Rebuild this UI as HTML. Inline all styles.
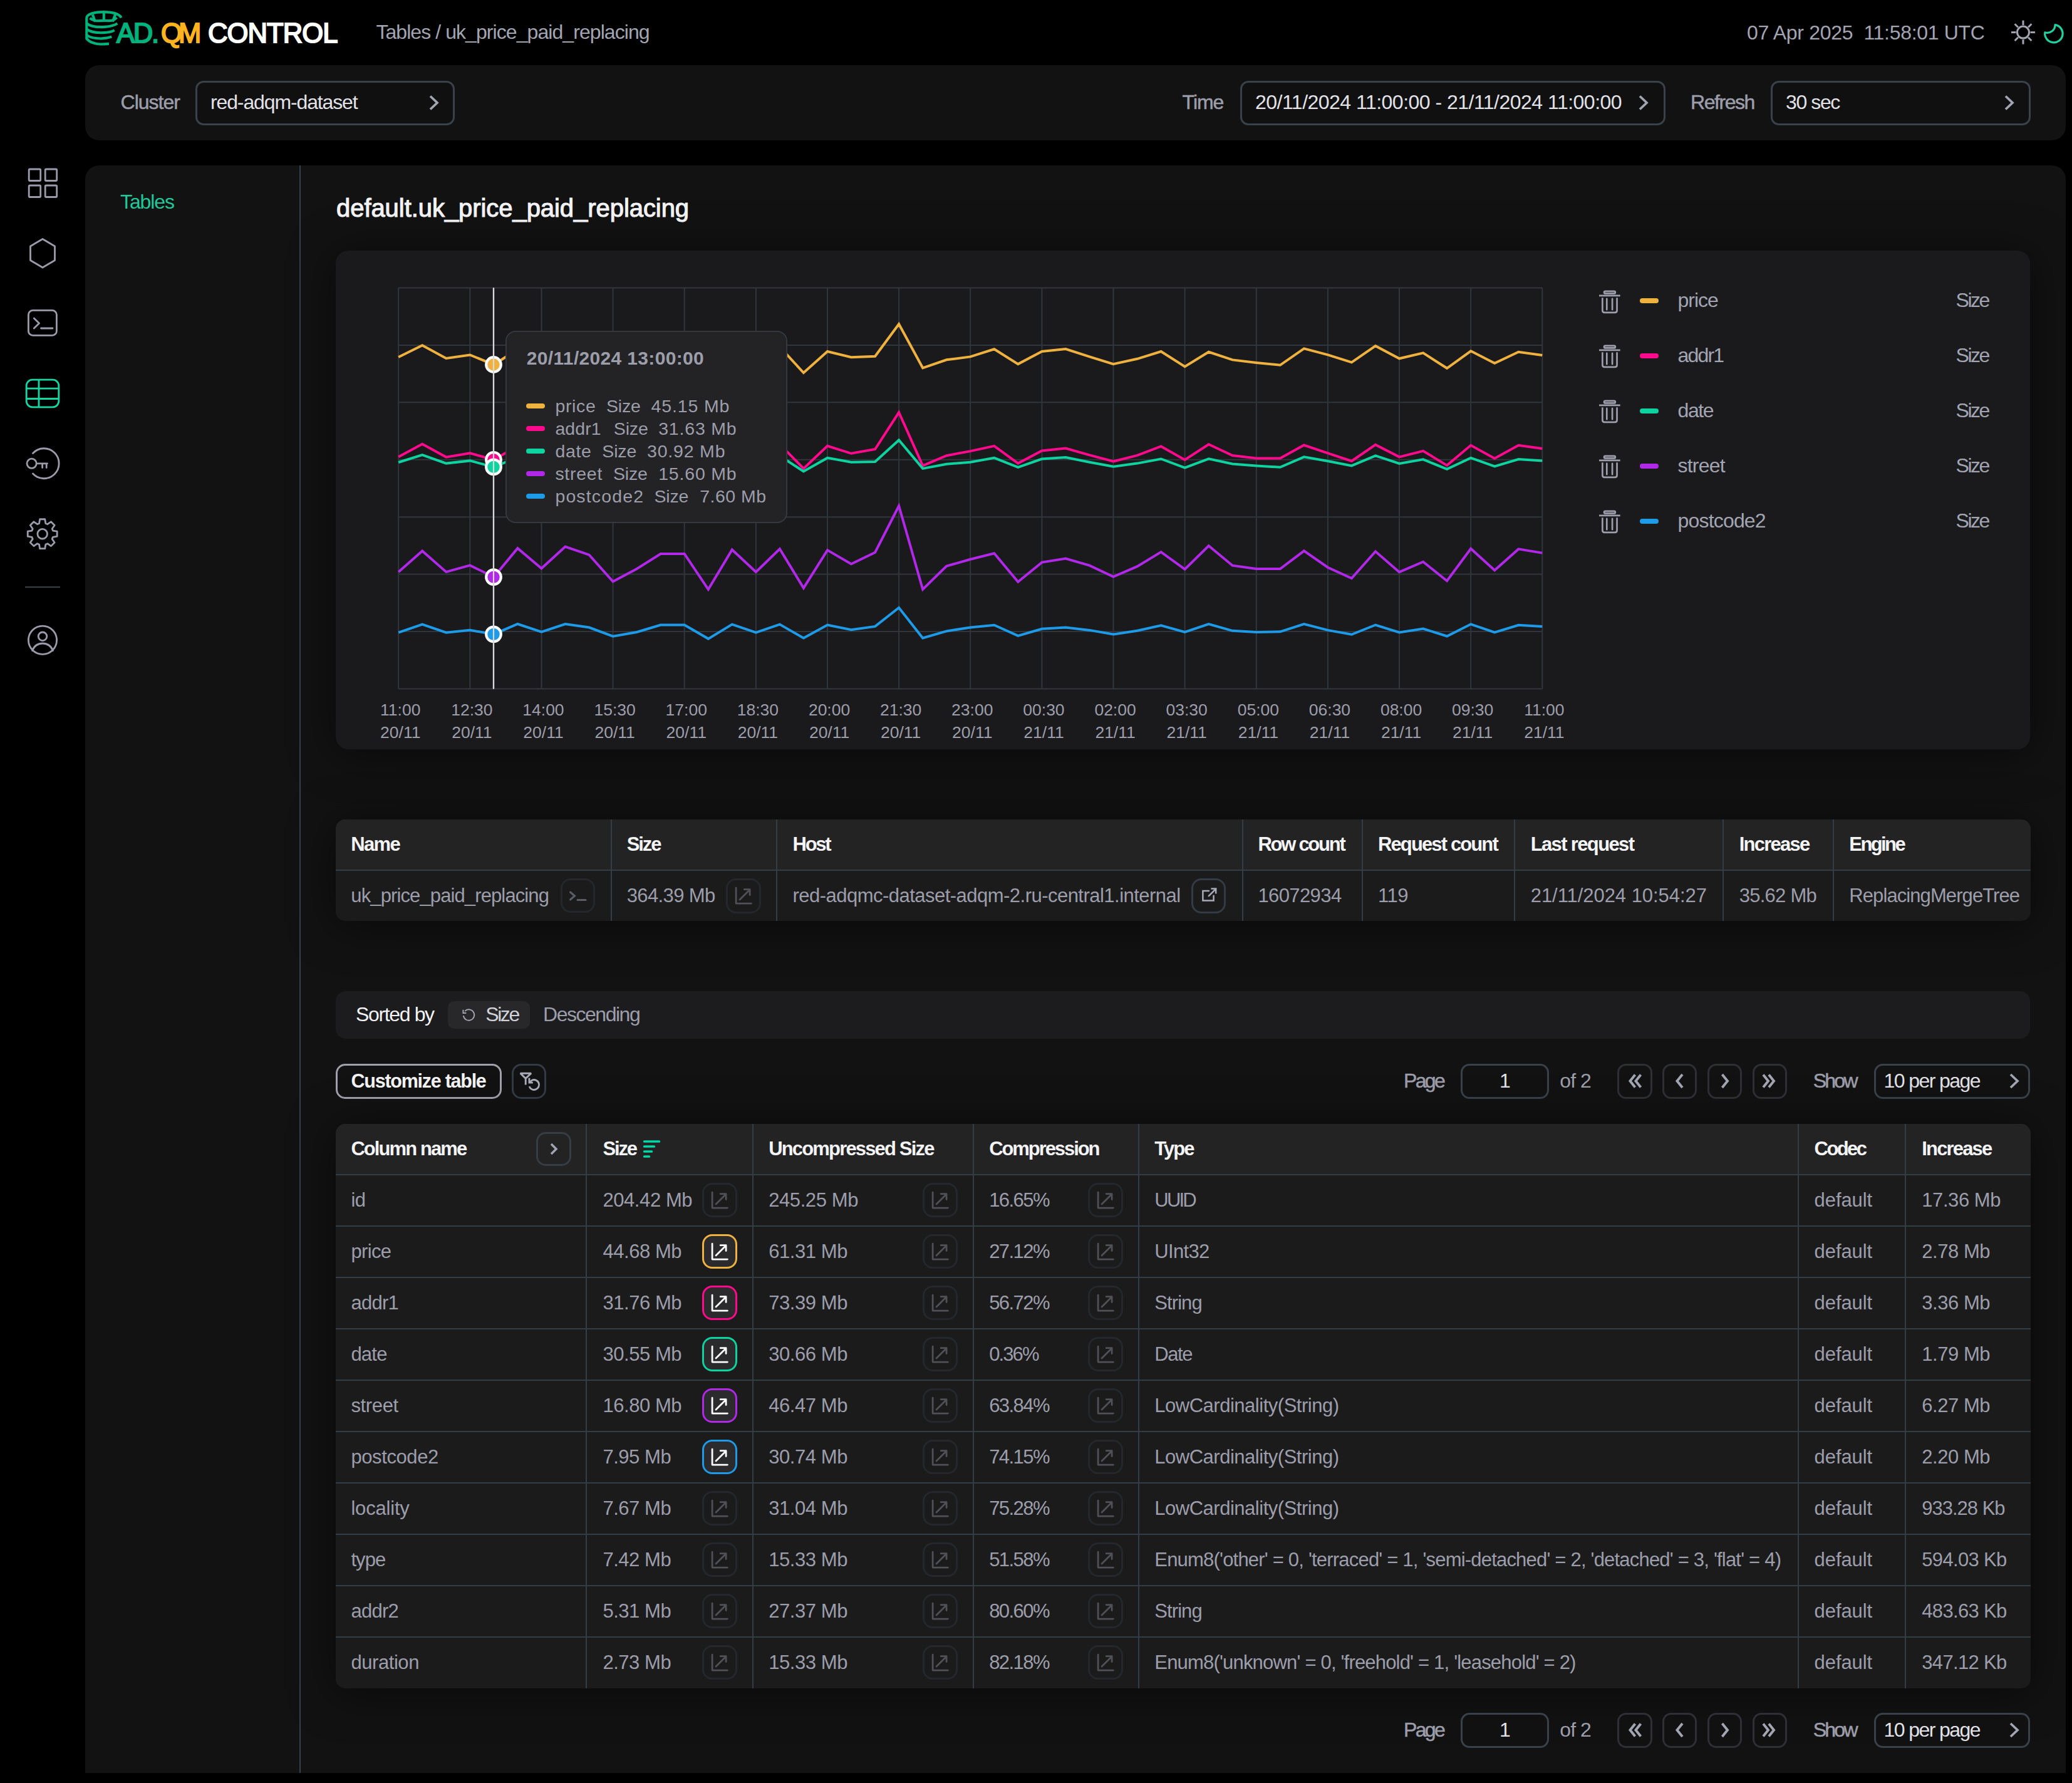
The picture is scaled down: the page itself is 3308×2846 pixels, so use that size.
<!DOCTYPE html>
<html><head><meta charset="utf-8"><title>ADQM Control</title>
<style>
html,body{margin:0;padding:0;}
body{width:3308px;height:2846px;background:#000;position:relative;overflow:hidden;font-family:"Liberation Sans",sans-serif;}
.t{position:absolute;white-space:pre;line-height:1;}
.b{position:absolute;box-sizing:border-box;}
svg{position:absolute;overflow:visible;}
</style></head><body>
<svg style="left:130px;top:10px" width="130" height="70" viewBox="0 0 2072 1116">
<g fill="none" stroke="#00b27c" stroke-width="66" stroke-linecap="butt">
<path d="M132 840 V300 C132 195 330 145 570 145 C800 145 960 195 1015 290"/>
<path d="M215 300 C330 400 440 365 570 365 C700 365 800 395 900 290"/>
<path d="M570 150 V345"/>
<path d="M285 215 L350 395"/>
<path d="M860 210 L795 390"/>
<path d="M140 440 C260 540 520 530 600 525 C740 515 850 480 915 440"/>
<path d="M140 590 C260 680 480 675 560 672 C680 668 780 645 840 610"/>
<path d="M140 740 C250 820 440 822 520 820 C620 815 700 800 770 775"/>
<path d="M132 820 C200 930 400 965 480 965 C560 965 640 960 700 955"/>
</g></svg>
<div class="t" style="left:186.0px;top:32.1px;font-size:43.60px;color:#00b27c;letter-spacing:-2.250px;-webkit-text-stroke:2px #00b27c;">AD.</div>
<div class="t" style="left:257.0px;top:32.1px;font-size:43.60px;color:#ffb41f;letter-spacing:-6.000px;-webkit-text-stroke:2px #ffb41f;">QM</div>
<div class="t" style="left:332.0px;top:32.1px;font-size:43.60px;color:#ffffff;letter-spacing:-0.958px;-webkit-text-stroke:2px #ffffff;">CONTROL</div>
<div class="t" style="left:600.4px;top:35.3px;font-size:32.00px;color:#a3a5b3;letter-spacing:-0.932px;">Tables / uk_price_paid_replacing</div>
<div class="t" style="left:2789.0px;top:35.8px;font-size:32.00px;color:#a3a5b3;letter-spacing:-0.302px;">07 Apr 2025  11:58:01 UTC</div>
<svg style="left:0;top:0" width="3308" height="100"><g stroke="#a3a5b3" stroke-width="3" fill="none"><circle cx="3230" cy="51.6" r="9.5"/><line x1="3241.5" y1="51.6" x2="3249.0" y2="51.6"/><line x1="3238.1" y1="59.7" x2="3243.4" y2="65.0"/><line x1="3230.0" y1="63.1" x2="3230.0" y2="70.6"/><line x1="3221.9" y1="59.7" x2="3216.6" y2="65.0"/><line x1="3218.5" y1="51.6" x2="3211.0" y2="51.6"/><line x1="3221.9" y1="43.5" x2="3216.6" y2="38.2"/><line x1="3230.0" y1="40.1" x2="3230.0" y2="32.6"/><line x1="3238.1" y1="43.5" x2="3243.4" y2="38.2"/></g><path d="M3281 39.6 A14.2 14.2 0 1 1 3264.8 51.8 A12.5 12.5 0 0 0 3281 39.6 Z" fill="none" stroke="#1fd3a0" stroke-width="3.2" stroke-linejoin="round"/></svg>
<div class="b" style="left:136.0px;top:104.0px;width:3162.0px;height:119.5px;background:#121212;border-radius:22px;"></div>
<div class="t" style="left:192.6px;top:146.9px;font-size:32.00px;color:#9d9eab;letter-spacing:-1.025px;-webkit-text-stroke:0.5px #9d9eab;">Cluster</div>
<div class="b" style="left:312.0px;top:128.6px;width:414.0px;height:71.0px;border:3px solid #39414a;border-radius:13px;background:#101010;"></div>
<div class="t" style="left:336.0px;top:146.9px;font-size:32.00px;color:#e2e2e8;letter-spacing:-1.127px;">red-adqm-dataset</div>
<svg style="left:684.0px;top:151px" width="20" height="26"><path d="M3 2.5 L14 13 L3 23.5" fill="none" stroke="#a3a5b3" stroke-width="3.8"/></svg>
<div class="t" style="left:1887.6px;top:146.9px;font-size:32.00px;color:#9d9eab;letter-spacing:-1.033px;-webkit-text-stroke:0.5px #9d9eab;">Time</div>
<div class="b" style="left:1979.6px;top:128.6px;width:679.0px;height:71.0px;border:3px solid #39414a;border-radius:13px;background:#101010;"></div>
<div class="t" style="left:2004.0px;top:146.9px;font-size:32.00px;color:#e2e2e8;letter-spacing:-0.514px;">20/11/2024 11:00:00 - 21/11/2024 11:00:00</div>
<svg style="left:2615.0px;top:151px" width="20" height="26"><path d="M3 2.5 L14 13 L3 23.5" fill="none" stroke="#a3a5b3" stroke-width="3.8"/></svg>
<div class="t" style="left:2699.0px;top:146.9px;font-size:32.00px;color:#9d9eab;letter-spacing:-1.450px;-webkit-text-stroke:0.5px #9d9eab;">Refresh</div>
<div class="b" style="left:2827.3px;top:128.6px;width:414.4px;height:71.0px;border:3px solid #39414a;border-radius:13px;background:#101010;"></div>
<div class="t" style="left:2851.0px;top:146.9px;font-size:32.00px;color:#e2e2e8;letter-spacing:-1.390px;">30 sec</div>
<svg style="left:3199.0px;top:151px" width="20" height="26"><path d="M3 2.5 L14 13 L3 23.5" fill="none" stroke="#a3a5b3" stroke-width="3.8"/></svg>
<svg style="left:0;top:0" width="136" height="1100"><g fill="none" stroke="#9a9cab" stroke-width="2.8" stroke-linejoin="round" stroke-linecap="round"><rect x="46.2" y="270" width="18.5" height="18.5" rx="1.5"/><rect x="72.2" y="270" width="18.5" height="18.5" rx="1.5"/><rect x="46.2" y="296" width="18.5" height="18.5" rx="1.5"/><rect x="72.2" y="296" width="18.5" height="18.5" rx="1.5"/><path d="M68 381.5 L87.5 393 L87.5 415.5 L68 427 L48.5 415.5 L48.5 393 Z"/><rect x="45.4" y="495.4" width="45" height="40" rx="7"/><path d="M54.3 508 L62.5 516 L54.3 524"/><path d="M65.5 524 H84"/><path d="M52.5 723.5 A24 24 0 1 1 52.5 756"/><circle cx="50.6" cy="739.8" r="7.6"/><path d="M58.2 739.8 H75.5 M67.6 739.8 V746.5 M74.2 739.8 V746.5"/><path d="M62.53 835.48 L63.67 828.74 L71.73 828.74 L72.87 835.48 L75.86 836.72 L81.44 832.77 L87.13 838.46 L83.18 844.04 L84.42 847.03 L91.16 848.17 L91.16 856.23 L84.42 857.37 L83.18 860.36 L87.13 865.94 L81.44 871.63 L75.86 867.68 L72.87 868.92 L71.73 875.66 L63.67 875.66 L62.53 868.92 L59.54 867.68 L53.96 871.63 L48.27 865.94 L52.22 860.36 L50.98 857.37 L44.24 856.23 L44.24 848.17 L50.98 847.03 L52.22 844.04 L48.27 838.46 L53.96 832.77 L59.54 836.72 Z"/><circle cx="67.7" cy="852.2" r="7.8"/><circle cx="68" cy="1021.8" r="22.6"/><circle cx="68" cy="1015.8" r="6.8"/><path d="M51.5 1038.5 C55 1030 61 1027 68 1027 C75 1027 81 1030 84.5 1038.5"/></g><g fill="none" stroke="#12d8a4" stroke-width="2.8"><rect x="42.2" y="606.2" width="51.6" height="43.6" rx="9.5"/><path d="M62 606.2 V649.8 M42.2 620.2 H93.8 M42.2 636.5 H93.8"/></g><rect x="40" y="936" width="56" height="2.2" fill="#353d45"/></svg>
<div class="b" style="left:136.0px;top:264.0px;width:3162.0px;height:2566.0px;background:#121212;border-radius:22px 22px 0 0;"></div>
<div class="b" style="left:478.0px;top:264.0px;width:2.0px;height:2566.0px;background:#35414d;"></div>
<div class="t" style="left:192.0px;top:305.7px;font-size:32.00px;color:#1fc99a;letter-spacing:-1.100px;">Tables</div>
<div class="t" style="left:537.0px;top:312.1px;font-size:40.00px;color:#f4f4f6;letter-spacing:-0.058px;-webkit-text-stroke:1.1px #f4f4f6;">default.uk_price_paid_replacing</div>
<div class="b" style="left:536.0px;top:400.0px;width:2705.0px;height:796.0px;background:#1a1a1d;border-radius:20px;box-shadow:0 6px 70px rgba(0,0,0,0.5);"></div>
<svg style="left:0;top:0" width="3308" height="1200"><g stroke="#30363d" stroke-width="2" fill="none"><line x1="636.2" y1="459.5" x2="636.2" y2="1099.4"/><line x1="750.3" y1="459.5" x2="750.3" y2="1099.4"/><line x1="864.5" y1="459.5" x2="864.5" y2="1099.4"/><line x1="978.6" y1="459.5" x2="978.6" y2="1099.4"/><line x1="1092.7" y1="459.5" x2="1092.7" y2="1099.4"/><line x1="1206.9" y1="459.5" x2="1206.9" y2="1099.4"/><line x1="1321.0" y1="459.5" x2="1321.0" y2="1099.4"/><line x1="1435.1" y1="459.5" x2="1435.1" y2="1099.4"/><line x1="1549.2" y1="459.5" x2="1549.2" y2="1099.4"/><line x1="1663.4" y1="459.5" x2="1663.4" y2="1099.4"/><line x1="1777.5" y1="459.5" x2="1777.5" y2="1099.4"/><line x1="1891.6" y1="459.5" x2="1891.6" y2="1099.4"/><line x1="2005.8" y1="459.5" x2="2005.8" y2="1099.4"/><line x1="2119.9" y1="459.5" x2="2119.9" y2="1099.4"/><line x1="2234.0" y1="459.5" x2="2234.0" y2="1099.4"/><line x1="2348.2" y1="459.5" x2="2348.2" y2="1099.4"/><line x1="2462.3" y1="459.5" x2="2462.3" y2="1099.4"/><line x1="636.2" y1="459.5" x2="2462.3" y2="459.5"/><line x1="636.2" y1="550.9" x2="2462.3" y2="550.9"/><line x1="636.2" y1="642.3" x2="2462.3" y2="642.3"/><line x1="636.2" y1="733.7" x2="2462.3" y2="733.7"/><line x1="636.2" y1="825.2" x2="2462.3" y2="825.2"/><line x1="636.2" y1="916.6" x2="2462.3" y2="916.6"/><line x1="636.2" y1="1008.0" x2="2462.3" y2="1008.0"/><line x1="636.2" y1="1099.4" x2="2462.3" y2="1099.4"/></g><path d="M636.2 570.0 L674.2 551.2 L712.3 572.0 L750.3 566.5 L788.4 582.0 L826.4 557.7 L864.5 565.0 L902.5 575.0 L940.6 560.0 L978.6 570.0 L1016.6 568.0 L1054.7 580.0 L1092.7 562.0 L1130.8 572.0 L1168.8 566.0 L1206.9 575.0 L1244.9 553.6 L1282.9 595.0 L1321.0 561.0 L1359.0 570.3 L1397.1 568.8 L1435.1 517.2 L1473.2 587.3 L1511.2 574.3 L1549.2 569.4 L1587.3 557.3 L1625.3 581.1 L1663.4 561.0 L1701.4 557.0 L1739.5 569.4 L1777.5 581.1 L1815.6 572.8 L1853.6 561.0 L1891.6 585.2 L1929.7 561.8 L1967.7 574.4 L2005.8 578.9 L2043.8 582.8 L2081.9 556.4 L2119.9 566.3 L2157.9 578.3 L2196.0 552.2 L2234.0 572.3 L2272.1 563.3 L2310.1 587.8 L2348.2 560.3 L2386.2 579.8 L2424.3 561.8 L2462.3 566.9" fill="none" stroke="#f0b23f" stroke-width="4" stroke-linejoin="miter"/><path d="M636.2 729.2 L674.2 708.8 L712.3 729.6 L750.3 723.4 L788.4 733.8 L826.4 712.0 L864.5 720.0 L902.5 730.0 L940.6 715.0 L978.6 725.0 L1016.6 722.0 L1054.7 735.0 L1092.7 718.0 L1130.8 728.0 L1168.8 720.0 L1206.9 732.0 L1244.9 709.0 L1282.9 747.9 L1321.0 711.8 L1359.0 723.8 L1397.1 717.0 L1435.1 658.3 L1473.2 743.3 L1511.2 727.2 L1549.2 720.1 L1587.3 711.8 L1625.3 739.6 L1663.4 719.5 L1701.4 715.5 L1739.5 726.3 L1777.5 736.5 L1815.6 726.9 L1853.6 712.4 L1891.6 733.9 L1929.7 709.3 L1967.7 727.0 L2005.8 731.5 L2043.8 731.5 L2081.9 710.5 L2119.9 723.4 L2157.9 736.0 L2196.0 709.9 L2234.0 729.4 L2272.1 719.8 L2310.1 742.9 L2348.2 710.8 L2386.2 731.8 L2424.3 710.8 L2462.3 715.9" fill="none" stroke="#ff0a8c" stroke-width="4" stroke-linejoin="miter"/><path d="M636.2 738.0 L674.2 726.0 L712.3 739.6 L750.3 735.4 L788.4 745.4 L826.4 730.0 L864.5 735.0 L902.5 742.0 L940.6 731.0 L978.6 738.0 L1016.6 736.0 L1054.7 746.0 L1092.7 733.0 L1130.8 740.0 L1168.8 735.0 L1206.9 744.0 L1244.9 727.5 L1282.9 752.5 L1321.0 730.9 L1359.0 737.7 L1397.1 737.1 L1435.1 702.5 L1473.2 747.9 L1511.2 740.8 L1549.2 737.7 L1587.3 730.9 L1625.3 745.8 L1663.4 732.5 L1701.4 730.0 L1739.5 737.7 L1777.5 744.8 L1815.6 739.6 L1853.6 732.5 L1891.6 746.7 L1929.7 732.4 L1967.7 740.5 L2005.8 743.4 L2043.8 745.8 L2081.9 729.4 L2119.9 736.0 L2157.9 743.4 L2196.0 727.3 L2234.0 739.9 L2272.1 733.3 L2310.1 748.8 L2348.2 730.9 L2386.2 744.3 L2424.3 733.0 L2462.3 735.4" fill="none" stroke="#0cd3a0" stroke-width="4" stroke-linejoin="miter"/><path d="M636.2 912.9 L674.2 879.4 L712.3 912.9 L750.3 902.4 L788.4 921.1 L826.4 875.2 L864.5 907.3 L902.5 872.5 L940.6 885.7 L978.6 928.3 L1016.6 908.0 L1054.7 884.0 L1092.7 884.0 L1130.8 940.8 L1168.8 877.5 L1206.9 912.9 L1244.9 876.2 L1282.9 938.6 L1321.0 878.1 L1359.0 900.3 L1397.1 881.7 L1435.1 807.5 L1473.2 940.7 L1511.2 903.6 L1549.2 892.8 L1587.3 883.2 L1625.3 928.7 L1663.4 897.6 L1701.4 891.6 L1739.5 902.7 L1777.5 920.6 L1815.6 904.2 L1853.6 881.1 L1891.6 908.7 L1929.7 871.3 L1967.7 902.7 L2005.8 908.1 L2043.8 908.1 L2081.9 879.3 L2119.9 905.7 L2157.9 923.0 L2196.0 880.2 L2234.0 913.2 L2272.1 896.7 L2310.1 927.2 L2348.2 875.8 L2386.2 910.2 L2424.3 876.4 L2462.3 882.6" fill="none" stroke="#b128e8" stroke-width="4" stroke-linejoin="miter"/><path d="M636.2 1009.7 L674.2 996.6 L712.3 1009.7 L750.3 1005.8 L788.4 1012.4 L826.4 996.0 L864.5 1008.7 L902.5 996.0 L940.6 1001.5 L978.6 1015.6 L1016.6 1009.0 L1054.7 997.6 L1092.7 997.6 L1130.8 1019.6 L1168.8 996.6 L1206.9 1009.7 L1244.9 996.6 L1282.9 1018.5 L1321.0 997.5 L1359.0 1005.3 L1397.1 999.9 L1435.1 970.0 L1473.2 1018.5 L1511.2 1007.4 L1549.2 1001.4 L1587.3 997.8 L1625.3 1014.9 L1663.4 1003.8 L1701.4 1001.4 L1739.5 1005.9 L1777.5 1012.5 L1815.6 1006.8 L1853.6 998.4 L1891.6 1008.9 L1929.7 996.0 L1967.7 1006.8 L2005.8 1008.9 L2043.8 1008.3 L2081.9 996.0 L2119.9 1005.9 L2157.9 1012.8 L2196.0 997.5 L2234.0 1009.5 L2272.1 1003.5 L2310.1 1015.5 L2348.2 996.3 L2386.2 1009.5 L2424.3 997.8 L2462.3 999.9" fill="none" stroke="#1e9be8" stroke-width="4" stroke-linejoin="miter"/><line x1="788" y1="459.5" x2="788" y2="1099.4" stroke="#d9d9dc" stroke-width="2.2"/><circle cx="788" cy="582.0" r="11.8" fill="#f0b23f" stroke="#ffffff" stroke-width="4.2"/><circle cx="788" cy="733.8" r="11.8" fill="#ff0a8c" stroke="#ffffff" stroke-width="4.2"/><circle cx="788" cy="745.4" r="11.8" fill="#0cd3a0" stroke="#ffffff" stroke-width="4.2"/><circle cx="788" cy="921.1" r="11.8" fill="#b128e8" stroke="#ffffff" stroke-width="4.2"/><circle cx="788" cy="1012.4" r="11.8" fill="#1e9be8" stroke="#ffffff" stroke-width="4.2"/><line x1="788" y1="459.5" x2="788" y2="1099.4" stroke="#d9d9dc" stroke-width="2.2"/></svg>
<div class="b" style="left:806.5px;top:528.0px;width:450.5px;height:307.0px;background:#232325;border:2px solid #34393f;border-radius:16px;"></div>
<div class="t" style="left:840.8px;top:556.5px;font-size:30.00px;color:#9d9eab;letter-spacing:0.333px;font-weight:bold;">20/11/2024 13:00:00</div>
<div class="b" style="left:840.0px;top:644.0px;width:30.0px;height:8.0px;background:#f0b23f;border-radius:4px;"></div>
<div class="t" style="left:886.4px;top:633.5px;font-size:28.50px;color:#9d9eab;letter-spacing:0.662px;">price</div>
<div class="t" style="left:968.0px;top:633.5px;font-size:28.50px;color:#9d9eab;letter-spacing:-0.167px;">Size</div>
<div class="t" style="left:1039.6px;top:633.5px;font-size:28.50px;color:#9d9eab;letter-spacing:0.864px;">45.15 Mb</div>
<div class="b" style="left:840.0px;top:680.0px;width:30.0px;height:8.0px;background:#ff0a8c;border-radius:4px;"></div>
<div class="t" style="left:886.4px;top:669.5px;font-size:28.50px;color:#9d9eab;letter-spacing:0.075px;">addr1</div>
<div class="t" style="left:979.8px;top:669.5px;font-size:28.50px;color:#9d9eab;letter-spacing:-0.167px;">Size</div>
<div class="t" style="left:1051.2px;top:669.5px;font-size:28.50px;color:#9d9eab;letter-spacing:0.807px;">31.63 Mb</div>
<div class="b" style="left:840.0px;top:716.0px;width:30.0px;height:8.0px;background:#0cd3a0;border-radius:4px;"></div>
<div class="t" style="left:886.4px;top:705.5px;font-size:28.50px;color:#9d9eab;letter-spacing:0.667px;">date</div>
<div class="t" style="left:961.3px;top:705.5px;font-size:28.50px;color:#9d9eab;letter-spacing:-0.167px;">Size</div>
<div class="t" style="left:1033.0px;top:705.5px;font-size:28.50px;color:#9d9eab;letter-spacing:0.807px;">30.92 Mb</div>
<div class="b" style="left:840.0px;top:752.0px;width:30.0px;height:8.0px;background:#b128e8;border-radius:4px;"></div>
<div class="t" style="left:886.4px;top:741.5px;font-size:28.50px;color:#9d9eab;letter-spacing:0.730px;">street</div>
<div class="t" style="left:979.0px;top:741.5px;font-size:28.50px;color:#9d9eab;letter-spacing:-0.167px;">Size</div>
<div class="t" style="left:1051.2px;top:741.5px;font-size:28.50px;color:#9d9eab;letter-spacing:0.807px;">15.60 Mb</div>
<div class="b" style="left:840.0px;top:788.0px;width:30.0px;height:8.0px;background:#1e9be8;border-radius:4px;"></div>
<div class="t" style="left:886.4px;top:777.5px;font-size:28.50px;color:#9d9eab;letter-spacing:1.138px;">postcode2</div>
<div class="t" style="left:1044.4px;top:777.5px;font-size:28.50px;color:#9d9eab;letter-spacing:-0.167px;">Size</div>
<div class="t" style="left:1117.2px;top:777.5px;font-size:28.50px;color:#9d9eab;letter-spacing:0.500px;">7.60 Mb</div>
<div class="t" style="left:607.1px;top:1120.3px;font-size:26.50px;color:#9d9eab;">11:00</div>
<div class="t" style="left:607.1px;top:1155.9px;font-size:26.50px;color:#9d9eab;">20/11</div>
<div class="t" style="left:720.2px;top:1120.3px;font-size:26.50px;color:#9d9eab;">12:30</div>
<div class="t" style="left:721.2px;top:1155.9px;font-size:26.50px;color:#9d9eab;">20/11</div>
<div class="t" style="left:834.3px;top:1120.3px;font-size:26.50px;color:#9d9eab;">14:00</div>
<div class="t" style="left:835.3px;top:1155.9px;font-size:26.50px;color:#9d9eab;">20/11</div>
<div class="t" style="left:948.5px;top:1120.3px;font-size:26.50px;color:#9d9eab;">15:30</div>
<div class="t" style="left:949.5px;top:1155.9px;font-size:26.50px;color:#9d9eab;">20/11</div>
<div class="t" style="left:1062.6px;top:1120.3px;font-size:26.50px;color:#9d9eab;">17:00</div>
<div class="t" style="left:1063.6px;top:1155.9px;font-size:26.50px;color:#9d9eab;">20/11</div>
<div class="t" style="left:1176.7px;top:1120.3px;font-size:26.50px;color:#9d9eab;">18:30</div>
<div class="t" style="left:1177.7px;top:1155.9px;font-size:26.50px;color:#9d9eab;">20/11</div>
<div class="t" style="left:1290.9px;top:1120.3px;font-size:26.50px;color:#9d9eab;">20:00</div>
<div class="t" style="left:1291.9px;top:1155.9px;font-size:26.50px;color:#9d9eab;">20/11</div>
<div class="t" style="left:1405.0px;top:1120.3px;font-size:26.50px;color:#9d9eab;">21:30</div>
<div class="t" style="left:1406.0px;top:1155.9px;font-size:26.50px;color:#9d9eab;">20/11</div>
<div class="t" style="left:1519.1px;top:1120.3px;font-size:26.50px;color:#9d9eab;">23:00</div>
<div class="t" style="left:1520.1px;top:1155.9px;font-size:26.50px;color:#9d9eab;">20/11</div>
<div class="t" style="left:1633.3px;top:1120.3px;font-size:26.50px;color:#9d9eab;">00:30</div>
<div class="t" style="left:1634.3px;top:1155.9px;font-size:26.50px;color:#9d9eab;">21/11</div>
<div class="t" style="left:1747.4px;top:1120.3px;font-size:26.50px;color:#9d9eab;">02:00</div>
<div class="t" style="left:1748.4px;top:1155.9px;font-size:26.50px;color:#9d9eab;">21/11</div>
<div class="t" style="left:1861.5px;top:1120.3px;font-size:26.50px;color:#9d9eab;">03:30</div>
<div class="t" style="left:1862.5px;top:1155.9px;font-size:26.50px;color:#9d9eab;">21/11</div>
<div class="t" style="left:1975.7px;top:1120.3px;font-size:26.50px;color:#9d9eab;">05:00</div>
<div class="t" style="left:1976.7px;top:1155.9px;font-size:26.50px;color:#9d9eab;">21/11</div>
<div class="t" style="left:2089.8px;top:1120.3px;font-size:26.50px;color:#9d9eab;">06:30</div>
<div class="t" style="left:2090.8px;top:1155.9px;font-size:26.50px;color:#9d9eab;">21/11</div>
<div class="t" style="left:2203.9px;top:1120.3px;font-size:26.50px;color:#9d9eab;">08:00</div>
<div class="t" style="left:2204.9px;top:1155.9px;font-size:26.50px;color:#9d9eab;">21/11</div>
<div class="t" style="left:2318.0px;top:1120.3px;font-size:26.50px;color:#9d9eab;">09:30</div>
<div class="t" style="left:2319.0px;top:1155.9px;font-size:26.50px;color:#9d9eab;">21/11</div>
<div class="t" style="left:2433.2px;top:1120.3px;font-size:26.50px;color:#9d9eab;">11:00</div>
<div class="t" style="left:2433.2px;top:1155.9px;font-size:26.50px;color:#9d9eab;">21/11</div>
<svg style="left:2553.0px;top:462.5px" width="36" height="40" viewBox="0 0 36 40"><g fill="none" stroke="#9d9eab" stroke-width="2.7"><path d="M0 8.9 H33.7"/><rect x="8.05" y="1.85" width="17.8" height="3.6" rx="1.8"/><path d="M5.35 12.3 V32.5 Q5.35 35.95 8.8 35.95 H25.1 Q28.55 35.95 28.55 32.5 V12.3"/><path d="M12.3 13.8 V31.2 M21.1 13.8 V31.2" stroke-linecap="round"/></g></svg>
<div class="b" style="left:2618.0px;top:476.0px;width:30.0px;height:8.0px;background:#f0b23f;border-radius:4px;"></div>
<div class="t" style="left:2678.6px;top:462.9px;font-size:32.00px;color:#a3a5b3;letter-spacing:-1.038px;">price</div>
<div class="t" style="left:3122.6px;top:462.9px;font-size:32.00px;color:#a3a5b3;letter-spacing:-2.517px;">Size</div>
<svg style="left:2553.0px;top:550.4px" width="36" height="40" viewBox="0 0 36 40"><g fill="none" stroke="#9d9eab" stroke-width="2.7"><path d="M0 8.9 H33.7"/><rect x="8.05" y="1.85" width="17.8" height="3.6" rx="1.8"/><path d="M5.35 12.3 V32.5 Q5.35 35.95 8.8 35.95 H25.1 Q28.55 35.95 28.55 32.5 V12.3"/><path d="M12.3 13.8 V31.2 M21.1 13.8 V31.2" stroke-linecap="round"/></g></svg>
<div class="b" style="left:2618.0px;top:563.9px;width:30.0px;height:8.0px;background:#ff0a8c;border-radius:4px;"></div>
<div class="t" style="left:2678.6px;top:550.8px;font-size:32.00px;color:#a3a5b3;letter-spacing:-1.862px;">addr1</div>
<div class="t" style="left:3122.6px;top:550.8px;font-size:32.00px;color:#a3a5b3;letter-spacing:-2.517px;">Size</div>
<svg style="left:2553.0px;top:638.3px" width="36" height="40" viewBox="0 0 36 40"><g fill="none" stroke="#9d9eab" stroke-width="2.7"><path d="M0 8.9 H33.7"/><rect x="8.05" y="1.85" width="17.8" height="3.6" rx="1.8"/><path d="M5.35 12.3 V32.5 Q5.35 35.95 8.8 35.95 H25.1 Q28.55 35.95 28.55 32.5 V12.3"/><path d="M12.3 13.8 V31.2 M21.1 13.8 V31.2" stroke-linecap="round"/></g></svg>
<div class="b" style="left:2618.0px;top:651.8px;width:30.0px;height:8.0px;background:#0cd3a0;border-radius:4px;"></div>
<div class="t" style="left:2678.6px;top:638.7px;font-size:32.00px;color:#a3a5b3;letter-spacing:-1.417px;">date</div>
<div class="t" style="left:3122.6px;top:638.7px;font-size:32.00px;color:#a3a5b3;letter-spacing:-2.517px;">Size</div>
<svg style="left:2553.0px;top:726.2px" width="36" height="40" viewBox="0 0 36 40"><g fill="none" stroke="#9d9eab" stroke-width="2.7"><path d="M0 8.9 H33.7"/><rect x="8.05" y="1.85" width="17.8" height="3.6" rx="1.8"/><path d="M5.35 12.3 V32.5 Q5.35 35.95 8.8 35.95 H25.1 Q28.55 35.95 28.55 32.5 V12.3"/><path d="M12.3 13.8 V31.2 M21.1 13.8 V31.2" stroke-linecap="round"/></g></svg>
<div class="b" style="left:2618.0px;top:739.7px;width:30.0px;height:8.0px;background:#b128e8;border-radius:4px;"></div>
<div class="t" style="left:2678.6px;top:726.6px;font-size:32.00px;color:#a3a5b3;letter-spacing:-0.820px;">street</div>
<div class="t" style="left:3122.6px;top:726.6px;font-size:32.00px;color:#a3a5b3;letter-spacing:-2.517px;">Size</div>
<svg style="left:2553.0px;top:814.1px" width="36" height="40" viewBox="0 0 36 40"><g fill="none" stroke="#9d9eab" stroke-width="2.7"><path d="M0 8.9 H33.7"/><rect x="8.05" y="1.85" width="17.8" height="3.6" rx="1.8"/><path d="M5.35 12.3 V32.5 Q5.35 35.95 8.8 35.95 H25.1 Q28.55 35.95 28.55 32.5 V12.3"/><path d="M12.3 13.8 V31.2 M21.1 13.8 V31.2" stroke-linecap="round"/></g></svg>
<div class="b" style="left:2618.0px;top:827.6px;width:30.0px;height:8.0px;background:#1e9be8;border-radius:4px;"></div>
<div class="t" style="left:2678.6px;top:814.5px;font-size:32.00px;color:#a3a5b3;letter-spacing:-0.831px;">postcode2</div>
<div class="t" style="left:3122.6px;top:814.5px;font-size:32.00px;color:#a3a5b3;letter-spacing:-2.517px;">Size</div>
<div class="b" style="left:536.0px;top:1308.0px;width:2705.5px;height:162.0px;background:#1b1b1c;border-radius:15px;box-shadow:0 6px 70px rgba(0,0,0,0.5);"></div>
<div class="b" style="left:536.0px;top:1308.0px;width:2705.5px;height:81.0px;background:#232324;border-radius:15px 15px 0 0;"></div>
<div class="b" style="left:536.0px;top:1388.0px;width:2705.5px;height:2.0px;background:#323d48;"></div>
<div class="b" style="left:974.5px;top:1308.0px;width:2.0px;height:162.0px;background:#323d48;"></div>
<div class="b" style="left:1239.0px;top:1308.0px;width:2.0px;height:162.0px;background:#323d48;"></div>
<div class="b" style="left:1982.5px;top:1308.0px;width:2.0px;height:162.0px;background:#323d48;"></div>
<div class="b" style="left:2174.0px;top:1308.0px;width:2.0px;height:162.0px;background:#323d48;"></div>
<div class="b" style="left:2416.6px;top:1308.0px;width:2.0px;height:162.0px;background:#323d48;"></div>
<div class="b" style="left:2750.2px;top:1308.0px;width:2.0px;height:162.0px;background:#323d48;"></div>
<div class="b" style="left:2925.8px;top:1308.0px;width:2.0px;height:162.0px;background:#323d48;"></div>
<div class="t" style="left:560.3px;top:1332.3px;font-size:31.00px;color:#f4f4f6;letter-spacing:-1.700px;font-weight:bold;">Name</div>
<div class="t" style="left:1000.7px;top:1332.3px;font-size:31.00px;color:#f4f4f6;letter-spacing:-2.100px;font-weight:bold;">Size</div>
<div class="t" style="left:1265.5px;top:1332.3px;font-size:31.00px;color:#f4f4f6;letter-spacing:-2.233px;font-weight:bold;">Host</div>
<div class="t" style="left:2008.4px;top:1332.3px;font-size:31.00px;color:#f4f4f6;letter-spacing:-2.262px;font-weight:bold;">Row count</div>
<div class="t" style="left:2200.0px;top:1332.3px;font-size:31.00px;color:#f4f4f6;letter-spacing:-1.879px;font-weight:bold;">Request count</div>
<div class="t" style="left:2443.7px;top:1332.3px;font-size:31.00px;color:#f4f4f6;letter-spacing:-1.641px;font-weight:bold;">Last request</div>
<div class="t" style="left:2776.7px;top:1332.3px;font-size:31.00px;color:#f4f4f6;letter-spacing:-1.750px;font-weight:bold;">Increase</div>
<div class="t" style="left:2952.3px;top:1332.3px;font-size:31.00px;color:#f4f4f6;letter-spacing:-2.590px;font-weight:bold;">Engine</div>
<div class="t" style="left:560.3px;top:1413.6px;font-size:31.00px;color:#9d9eab;letter-spacing:-0.882px;">uk_price_paid_replacing</div>
<div class="t" style="left:1000.7px;top:1413.6px;font-size:31.00px;color:#9d9eab;letter-spacing:-0.613px;">364.39 Mb</div>
<div class="t" style="left:1265.5px;top:1413.6px;font-size:31.00px;color:#9d9eab;letter-spacing:-0.524px;">red-adqmc-dataset-adqm-2.ru-central1.internal</div>
<div class="t" style="left:2008.4px;top:1413.6px;font-size:31.00px;color:#9d9eab;letter-spacing:-0.600px;">16072934</div>
<div class="t" style="left:2200.0px;top:1413.6px;font-size:31.00px;color:#9d9eab;letter-spacing:-0.450px;">119</div>
<div class="t" style="left:2443.7px;top:1413.6px;font-size:31.00px;color:#9d9eab;letter-spacing:-0.047px;">21/11/2024 10:54:27</div>
<div class="t" style="left:2776.7px;top:1413.6px;font-size:31.00px;color:#9d9eab;letter-spacing:-0.736px;">35.62 Mb</div>
<div class="t" style="left:2952.3px;top:1413.6px;font-size:31.00px;color:#9d9eab;letter-spacing:-0.915px;">ReplacingMergeTree</div>
<div class="b" style="left:894.6px;top:1402.0px;width:55.0px;height:55.0px;border:3.9px solid #24272b;border-radius:16px;"></div>
<svg style="left:894.6px;top:1402.0px" width="56" height="56"><g fill="none" stroke="#5b5e64" stroke-width="3" stroke-linecap="round"><path d="M15.5 22 L22.5 28 L15.5 34"/><path d="M27 34.5 H40"/></g></svg>
<div class="b" style="left:1159.0px;top:1402.0px;width:55.5px;height:55.5px;border:3.9px solid #24272b;border-radius:16px;"></div>
<svg style="left:1159.0px;top:1402.0px" width="56" height="56" viewBox="0 0 56 56"><g fill="none" stroke="#505156" stroke-width="2.8" stroke-linecap="round" stroke-linejoin="round"><path d="M16.1 15.2 V40.1 H40.4"/><path d="M22 34 L38.1 17.9 M29.2 17.7 H38.1 V26.5"/></g></svg>
<div class="b" style="left:1902.2px;top:1402.0px;width:55.3px;height:55.8px;border:3.8px solid #333c46;border-radius:16px;background:#1b1b1c;"></div>
<svg style="left:1903.0px;top:1402.0px" width="54" height="55"><g fill="none" stroke="#a9abb8" stroke-width="2.5" stroke-linecap="round" stroke-linejoin="miter"><path d="M27 20 H17.4 V35.6 H34.6 V27.8"/><path d="M26.8 28.2 L38 17"/><path d="M30.4 16.6 H38.2 V24.4" stroke-linecap="butt"/></g></svg>
<div class="b" style="left:536.0px;top:1582.0px;width:2705.0px;height:76.0px;background:#1c1c1e;border-radius:16px;"></div>
<div class="t" style="left:568.1px;top:1602.9px;font-size:32.00px;color:#f4f4f6;letter-spacing:-1.375px;">Sorted by</div>
<div class="b" style="left:715.0px;top:1598.3px;width:131.0px;height:43.4px;background:#28282b;border-radius:10px;"></div>
<svg style="left:736px;top:1608px" width="26" height="26"><g fill="none" stroke="#a3a5b3" stroke-width="1.9"><path d="M3.86 13.06 A8.7 8.7 0 1 0 6.14 6.07"/><path d="M3.4 3.8 V9 H8.4"/></g></svg>
<div class="t" style="left:775.3px;top:1602.9px;font-size:32.00px;color:#d2d3da;letter-spacing:-2.450px;">Size</div>
<div class="t" style="left:867.0px;top:1602.9px;font-size:32.00px;color:#9d9eab;letter-spacing:-1.478px;">Descending</div>
<div class="b" style="left:536.2px;top:1698.0px;width:264.6px;height:55.7px;border:3.6px solid #a0a1ac;border-radius:15px;"></div>
<div class="t" style="left:560.6px;top:1710.0px;font-size:30.50px;color:#f4f4f6;letter-spacing:-1.261px;font-weight:bold;">Customize table</div>
<div class="b" style="left:817.3px;top:1698.0px;width:54.8px;height:55.7px;border:3.6px solid #333c46;border-radius:15px;"></div>
<svg style="left:817px;top:1698px" width="56" height="56"><g fill="none" stroke="#a9abb8" stroke-width="2.9" stroke-linejoin="bevel"><path d="M13.8 15.2 H31 L22.2 23.4 Z M22.2 23.2 V33.4"/><path d="M28.04 36.13 A8 8 0 1 0 32.3 26.2 L28.2 30"/><path d="M28 22.8 V30.1 H33.8" stroke-linejoin="miter"/></g></svg>
<div class="t" style="left:2241.0px;top:1709.4px;font-size:32.00px;color:#9d9eab;letter-spacing:-2.650px;-webkit-text-stroke:0.5px #9d9eab;">Page</div>
<div class="b" style="left:2332.2px;top:1698.0px;width:141.3px;height:55.5px;border:3px solid #39414a;border-radius:14px;"></div>
<div class="t" style="left:2394.1px;top:1709.4px;font-size:32.00px;color:#e2e2e8;">1</div>
<div class="t" style="left:2490.3px;top:1709.4px;font-size:32.00px;color:#9d9eab;letter-spacing:-0.933px;">of 2</div>
<div class="b" style="left:2582.3px;top:1698.0px;width:55.3px;height:55.5px;border:3px solid #2e3035;border-radius:14px;"></div>
<svg style="left:2580.8px;top:1698.0px" width="56" height="56"><path d="M29.5 17.5 L21.5 27.5 L29.5 37.5 M38.5 17.5 L30.5 27.5 L38.5 37.5" fill="none" stroke="#a3a5b3" stroke-width="4" stroke-linejoin="miter"/></svg>
<div class="b" style="left:2654.0px;top:1698.0px;width:55.3px;height:55.5px;border:3px solid #2e3035;border-radius:14px;"></div>
<svg style="left:2653.0px;top:1698.0px" width="56" height="56"><path d="M33 17 L24.5 27.5 L33 38" fill="none" stroke="#a3a5b3" stroke-width="4" stroke-linejoin="miter"/></svg>
<div class="b" style="left:2726.0px;top:1698.0px;width:55.3px;height:55.5px;border:3px solid #2e3035;border-radius:14px;"></div>
<svg style="left:2725.0px;top:1698.0px" width="56" height="56"><path d="M24.5 17 L33 27.5 L24.5 38" fill="none" stroke="#a3a5b3" stroke-width="4" stroke-linejoin="miter"/></svg>
<div class="b" style="left:2798.0px;top:1698.0px;width:55.3px;height:55.5px;border:3px solid #2e3035;border-radius:14px;"></div>
<svg style="left:2797.0px;top:1698.0px" width="56" height="56"><path d="M18 17.5 L26 27.5 L18 37.5 M27 17.5 L35 27.5 L27 37.5" fill="none" stroke="#a3a5b3" stroke-width="4" stroke-linejoin="miter"/></svg>
<div class="t" style="left:2894.7px;top:1709.4px;font-size:32.00px;color:#9d9eab;letter-spacing:-2.750px;-webkit-text-stroke:0.5px #9d9eab;">Show</div>
<div class="b" style="left:2992.4px;top:1698.0px;width:248.9px;height:55.5px;border:3px solid #39414a;border-radius:14px;"></div>
<div class="t" style="left:3007.6px;top:1709.4px;font-size:32.00px;color:#e2e2e8;letter-spacing:-1.585px;">10 per page</div>
<svg style="left:3206px;top:1712.0px" width="20" height="28"><path d="M4 3 L15 13.5 L4 24" fill="none" stroke="#a3a5b3" stroke-width="3.8"/></svg>
<div class="b" style="left:536.3px;top:1794.0px;width:2705.3px;height:900.5px;background:#1b1b1c;border-radius:15px;box-shadow:0 6px 70px rgba(0,0,0,0.5);"></div>
<div class="b" style="left:536.3px;top:1794.0px;width:2705.3px;height:80.5px;background:#232324;border-radius:15px 15px 0 0;"></div>
<div class="b" style="left:536.3px;top:1873.5px;width:2705.3px;height:2.0px;background:#323d48;"></div>
<div class="b" style="left:536.3px;top:1955.5px;width:2705.3px;height:2.0px;background:#323d48;"></div>
<div class="b" style="left:536.3px;top:2037.5px;width:2705.3px;height:2.0px;background:#323d48;"></div>
<div class="b" style="left:536.3px;top:2119.5px;width:2705.3px;height:2.0px;background:#323d48;"></div>
<div class="b" style="left:536.3px;top:2201.5px;width:2705.3px;height:2.0px;background:#323d48;"></div>
<div class="b" style="left:536.3px;top:2283.5px;width:2705.3px;height:2.0px;background:#323d48;"></div>
<div class="b" style="left:536.3px;top:2365.5px;width:2705.3px;height:2.0px;background:#323d48;"></div>
<div class="b" style="left:536.3px;top:2447.5px;width:2705.3px;height:2.0px;background:#323d48;"></div>
<div class="b" style="left:536.3px;top:2529.5px;width:2705.3px;height:2.0px;background:#323d48;"></div>
<div class="b" style="left:536.3px;top:2611.5px;width:2705.3px;height:2.0px;background:#323d48;"></div>
<div class="b" style="left:935.3px;top:1794.0px;width:2.0px;height:900.5px;background:#323d48;"></div>
<div class="b" style="left:1201.2px;top:1794.0px;width:2.0px;height:900.5px;background:#323d48;"></div>
<div class="b" style="left:1552.8px;top:1794.0px;width:2.0px;height:900.5px;background:#323d48;"></div>
<div class="b" style="left:1816.9px;top:1794.0px;width:2.0px;height:900.5px;background:#323d48;"></div>
<div class="b" style="left:2869.7px;top:1794.0px;width:2.0px;height:900.5px;background:#323d48;"></div>
<div class="b" style="left:3040.7px;top:1794.0px;width:2.0px;height:900.5px;background:#323d48;"></div>
<div class="t" style="left:560.4px;top:1818.3px;font-size:31.00px;color:#f4f4f6;letter-spacing:-1.920px;font-weight:bold;">Column name</div>
<div class="t" style="left:962.4px;top:1818.3px;font-size:31.00px;color:#f4f4f6;letter-spacing:-2.133px;font-weight:bold;">Size</div>
<div class="t" style="left:1227.2px;top:1818.3px;font-size:31.00px;color:#f4f4f6;letter-spacing:-1.838px;font-weight:bold;">Uncompressed Size</div>
<div class="t" style="left:1579.2px;top:1818.3px;font-size:31.00px;color:#f4f4f6;letter-spacing:-2.080px;font-weight:bold;">Compression</div>
<div class="t" style="left:1843.3px;top:1818.3px;font-size:31.00px;color:#f4f4f6;letter-spacing:-1.967px;font-weight:bold;">Type</div>
<div class="t" style="left:2896.6px;top:1818.3px;font-size:31.00px;color:#f4f4f6;letter-spacing:-2.587px;font-weight:bold;">Codec</div>
<div class="t" style="left:3068.3px;top:1818.3px;font-size:31.00px;color:#f4f4f6;letter-spacing:-1.836px;font-weight:bold;">Increase</div>
<div class="b" style="left:856.4px;top:1806.8px;width:55.2px;height:54.2px;border:3px solid #353d45;border-radius:15px;"></div>
<svg style="left:856px;top:1807px" width="56" height="56"><path d="M24 19 L32 27 L24 35" fill="none" stroke="#a3a5b3" stroke-width="3.5"/></svg>
<svg style="left:1026px;top:1820px" width="30" height="30"><g stroke="#00d9a6" stroke-width="3.7" stroke-linecap="round"><path d="M2.7 2 H26.4 M2.7 10 H18.4 M2.7 18 H14.4 M2.7 26 H10.4"/></g></svg>
<div class="t" style="left:560.4px;top:1899.8px;font-size:31.00px;color:#9d9eab;letter-spacing:-0.455px;">id</div>
<div class="t" style="left:962.4px;top:1899.8px;font-size:31.00px;color:#9d9eab;letter-spacing:-0.414px;">204.42 Mb</div>
<div class="t" style="left:1227.2px;top:1899.8px;font-size:31.00px;color:#9d9eab;letter-spacing:-0.414px;">245.25 Mb</div>
<div class="t" style="left:1579.2px;top:1899.8px;font-size:31.00px;color:#9d9eab;letter-spacing:-1.577px;">16.65%</div>
<div class="t" style="left:1843.3px;top:1899.8px;font-size:31.00px;color:#9d9eab;letter-spacing:-2.789px;">UUID</div>
<div class="t" style="left:2896.6px;top:1899.8px;font-size:31.00px;color:#9d9eab;letter-spacing:-0.100px;">default</div>
<div class="t" style="left:3068.3px;top:1899.8px;font-size:31.00px;color:#9d9eab;letter-spacing:-0.436px;">17.36 Mb</div>
<div class="b" style="left:1121.0px;top:1887.8px;width:55.5px;height:55.5px;border:3.9px solid #24272b;border-radius:16px;"></div>
<svg style="left:1121.0px;top:1887.8px" width="56" height="56" viewBox="0 0 56 56"><g fill="none" stroke="#505156" stroke-width="2.8" stroke-linecap="round" stroke-linejoin="round"><path d="M16.1 15.2 V40.1 H40.4"/><path d="M22 34 L38.1 17.9 M29.2 17.7 H38.1 V26.5"/></g></svg>
<div class="b" style="left:1473.2px;top:1887.8px;width:55.5px;height:55.5px;border:3.9px solid #24272b;border-radius:16px;"></div>
<svg style="left:1473.2px;top:1887.8px" width="56" height="56" viewBox="0 0 56 56"><g fill="none" stroke="#505156" stroke-width="2.8" stroke-linecap="round" stroke-linejoin="round"><path d="M16.1 15.2 V40.1 H40.4"/><path d="M22 34 L38.1 17.9 M29.2 17.7 H38.1 V26.5"/></g></svg>
<div class="b" style="left:1737.0px;top:1887.8px;width:55.5px;height:55.5px;border:3.9px solid #24272b;border-radius:16px;"></div>
<svg style="left:1737.0px;top:1887.8px" width="56" height="56" viewBox="0 0 56 56"><g fill="none" stroke="#505156" stroke-width="2.8" stroke-linecap="round" stroke-linejoin="round"><path d="M16.1 15.2 V40.1 H40.4"/><path d="M22 34 L38.1 17.9 M29.2 17.7 H38.1 V26.5"/></g></svg>
<div class="t" style="left:560.4px;top:1981.8px;font-size:31.00px;color:#9d9eab;letter-spacing:-0.620px;">price</div>
<div class="t" style="left:962.4px;top:1981.8px;font-size:31.00px;color:#9d9eab;letter-spacing:-0.436px;">44.68 Mb</div>
<div class="t" style="left:1227.2px;top:1981.8px;font-size:31.00px;color:#9d9eab;letter-spacing:-0.436px;">61.31 Mb</div>
<div class="t" style="left:1579.2px;top:1981.8px;font-size:31.00px;color:#9d9eab;letter-spacing:-1.577px;">27.12%</div>
<div class="t" style="left:1843.3px;top:1981.8px;font-size:31.00px;color:#9d9eab;letter-spacing:-0.688px;">UInt32</div>
<div class="t" style="left:2896.6px;top:1981.8px;font-size:31.00px;color:#9d9eab;letter-spacing:-0.100px;">default</div>
<div class="t" style="left:3068.3px;top:1981.8px;font-size:31.00px;color:#9d9eab;letter-spacing:-0.464px;">2.78 Mb</div>
<div class="b" style="left:1121.0px;top:1969.8px;width:55.5px;height:55.5px;border:3.9px solid #f0b23f;border-radius:16px;background:#2b2b2d;"></div>
<svg style="left:1121.0px;top:1969.8px" width="56" height="56" viewBox="0 0 56 56"><g fill="none" stroke="#ffffff" stroke-width="2.8" stroke-linecap="round" stroke-linejoin="round"><path d="M16.1 15.2 V40.1 H40.4"/><path d="M22 34 L38.1 17.9 M29.2 17.7 H38.1 V26.5"/></g></svg>
<div class="b" style="left:1473.2px;top:1969.8px;width:55.5px;height:55.5px;border:3.9px solid #24272b;border-radius:16px;"></div>
<svg style="left:1473.2px;top:1969.8px" width="56" height="56" viewBox="0 0 56 56"><g fill="none" stroke="#505156" stroke-width="2.8" stroke-linecap="round" stroke-linejoin="round"><path d="M16.1 15.2 V40.1 H40.4"/><path d="M22 34 L38.1 17.9 M29.2 17.7 H38.1 V26.5"/></g></svg>
<div class="b" style="left:1737.0px;top:1969.8px;width:55.5px;height:55.5px;border:3.9px solid #24272b;border-radius:16px;"></div>
<svg style="left:1737.0px;top:1969.8px" width="56" height="56" viewBox="0 0 56 56"><g fill="none" stroke="#505156" stroke-width="2.8" stroke-linecap="round" stroke-linejoin="round"><path d="M16.1 15.2 V40.1 H40.4"/><path d="M22 34 L38.1 17.9 M29.2 17.7 H38.1 V26.5"/></g></svg>
<div class="t" style="left:560.4px;top:2063.8px;font-size:31.00px;color:#9d9eab;letter-spacing:-0.733px;">addr1</div>
<div class="t" style="left:962.4px;top:2063.8px;font-size:31.00px;color:#9d9eab;letter-spacing:-0.436px;">31.76 Mb</div>
<div class="t" style="left:1227.2px;top:2063.8px;font-size:31.00px;color:#9d9eab;letter-spacing:-0.436px;">73.39 Mb</div>
<div class="t" style="left:1579.2px;top:2063.8px;font-size:31.00px;color:#9d9eab;letter-spacing:-1.577px;">56.72%</div>
<div class="t" style="left:1843.3px;top:2063.8px;font-size:31.00px;color:#9d9eab;letter-spacing:-0.920px;">String</div>
<div class="t" style="left:2896.6px;top:2063.8px;font-size:31.00px;color:#9d9eab;letter-spacing:-0.100px;">default</div>
<div class="t" style="left:3068.3px;top:2063.8px;font-size:31.00px;color:#9d9eab;letter-spacing:-0.464px;">3.36 Mb</div>
<div class="b" style="left:1121.0px;top:2051.8px;width:55.5px;height:55.5px;border:3.9px solid #ff0a8c;border-radius:16px;background:#2b2b2d;"></div>
<svg style="left:1121.0px;top:2051.8px" width="56" height="56" viewBox="0 0 56 56"><g fill="none" stroke="#ffffff" stroke-width="2.8" stroke-linecap="round" stroke-linejoin="round"><path d="M16.1 15.2 V40.1 H40.4"/><path d="M22 34 L38.1 17.9 M29.2 17.7 H38.1 V26.5"/></g></svg>
<div class="b" style="left:1473.2px;top:2051.8px;width:55.5px;height:55.5px;border:3.9px solid #24272b;border-radius:16px;"></div>
<svg style="left:1473.2px;top:2051.8px" width="56" height="56" viewBox="0 0 56 56"><g fill="none" stroke="#505156" stroke-width="2.8" stroke-linecap="round" stroke-linejoin="round"><path d="M16.1 15.2 V40.1 H40.4"/><path d="M22 34 L38.1 17.9 M29.2 17.7 H38.1 V26.5"/></g></svg>
<div class="b" style="left:1737.0px;top:2051.8px;width:55.5px;height:55.5px;border:3.9px solid #24272b;border-radius:16px;"></div>
<svg style="left:1737.0px;top:2051.8px" width="56" height="56" viewBox="0 0 56 56"><g fill="none" stroke="#505156" stroke-width="2.8" stroke-linecap="round" stroke-linejoin="round"><path d="M16.1 15.2 V40.1 H40.4"/><path d="M22 34 L38.1 17.9 M29.2 17.7 H38.1 V26.5"/></g></svg>
<div class="t" style="left:560.4px;top:2145.8px;font-size:31.00px;color:#9d9eab;letter-spacing:-0.764px;">date</div>
<div class="t" style="left:962.4px;top:2145.8px;font-size:31.00px;color:#9d9eab;letter-spacing:-0.436px;">30.55 Mb</div>
<div class="t" style="left:1227.2px;top:2145.8px;font-size:31.00px;color:#9d9eab;letter-spacing:-0.436px;">30.66 Mb</div>
<div class="t" style="left:1579.2px;top:2145.8px;font-size:31.00px;color:#9d9eab;letter-spacing:-1.905px;">0.36%</div>
<div class="t" style="left:1843.3px;top:2145.8px;font-size:31.00px;color:#9d9eab;letter-spacing:-1.440px;">Date</div>
<div class="t" style="left:2896.6px;top:2145.8px;font-size:31.00px;color:#9d9eab;letter-spacing:-0.100px;">default</div>
<div class="t" style="left:3068.3px;top:2145.8px;font-size:31.00px;color:#9d9eab;letter-spacing:-0.464px;">1.79 Mb</div>
<div class="b" style="left:1121.0px;top:2133.8px;width:55.5px;height:55.5px;border:3.9px solid #0cd3a0;border-radius:16px;background:#2b2b2d;"></div>
<svg style="left:1121.0px;top:2133.8px" width="56" height="56" viewBox="0 0 56 56"><g fill="none" stroke="#ffffff" stroke-width="2.8" stroke-linecap="round" stroke-linejoin="round"><path d="M16.1 15.2 V40.1 H40.4"/><path d="M22 34 L38.1 17.9 M29.2 17.7 H38.1 V26.5"/></g></svg>
<div class="b" style="left:1473.2px;top:2133.8px;width:55.5px;height:55.5px;border:3.9px solid #24272b;border-radius:16px;"></div>
<svg style="left:1473.2px;top:2133.8px" width="56" height="56" viewBox="0 0 56 56"><g fill="none" stroke="#505156" stroke-width="2.8" stroke-linecap="round" stroke-linejoin="round"><path d="M16.1 15.2 V40.1 H40.4"/><path d="M22 34 L38.1 17.9 M29.2 17.7 H38.1 V26.5"/></g></svg>
<div class="b" style="left:1737.0px;top:2133.8px;width:55.5px;height:55.5px;border:3.9px solid #24272b;border-radius:16px;"></div>
<svg style="left:1737.0px;top:2133.8px" width="56" height="56" viewBox="0 0 56 56"><g fill="none" stroke="#505156" stroke-width="2.8" stroke-linecap="round" stroke-linejoin="round"><path d="M16.1 15.2 V40.1 H40.4"/><path d="M22 34 L38.1 17.9 M29.2 17.7 H38.1 V26.5"/></g></svg>
<div class="t" style="left:560.4px;top:2227.8px;font-size:31.00px;color:#9d9eab;letter-spacing:-0.340px;">street</div>
<div class="t" style="left:962.4px;top:2227.8px;font-size:31.00px;color:#9d9eab;letter-spacing:-0.436px;">16.80 Mb</div>
<div class="t" style="left:1227.2px;top:2227.8px;font-size:31.00px;color:#9d9eab;letter-spacing:-0.436px;">46.47 Mb</div>
<div class="t" style="left:1579.2px;top:2227.8px;font-size:31.00px;color:#9d9eab;letter-spacing:-1.577px;">63.84%</div>
<div class="t" style="left:1843.3px;top:2227.8px;font-size:31.00px;color:#9d9eab;letter-spacing:-0.486px;">LowCardinality(String)</div>
<div class="t" style="left:2896.6px;top:2227.8px;font-size:31.00px;color:#9d9eab;letter-spacing:-0.100px;">default</div>
<div class="t" style="left:3068.3px;top:2227.8px;font-size:31.00px;color:#9d9eab;letter-spacing:-0.464px;">6.27 Mb</div>
<div class="b" style="left:1121.0px;top:2215.8px;width:55.5px;height:55.5px;border:3.9px solid #b128e8;border-radius:16px;background:#2b2b2d;"></div>
<svg style="left:1121.0px;top:2215.8px" width="56" height="56" viewBox="0 0 56 56"><g fill="none" stroke="#ffffff" stroke-width="2.8" stroke-linecap="round" stroke-linejoin="round"><path d="M16.1 15.2 V40.1 H40.4"/><path d="M22 34 L38.1 17.9 M29.2 17.7 H38.1 V26.5"/></g></svg>
<div class="b" style="left:1473.2px;top:2215.8px;width:55.5px;height:55.5px;border:3.9px solid #24272b;border-radius:16px;"></div>
<svg style="left:1473.2px;top:2215.8px" width="56" height="56" viewBox="0 0 56 56"><g fill="none" stroke="#505156" stroke-width="2.8" stroke-linecap="round" stroke-linejoin="round"><path d="M16.1 15.2 V40.1 H40.4"/><path d="M22 34 L38.1 17.9 M29.2 17.7 H38.1 V26.5"/></g></svg>
<div class="b" style="left:1737.0px;top:2215.8px;width:55.5px;height:55.5px;border:3.9px solid #24272b;border-radius:16px;"></div>
<svg style="left:1737.0px;top:2215.8px" width="56" height="56" viewBox="0 0 56 56"><g fill="none" stroke="#505156" stroke-width="2.8" stroke-linecap="round" stroke-linejoin="round"><path d="M16.1 15.2 V40.1 H40.4"/><path d="M22 34 L38.1 17.9 M29.2 17.7 H38.1 V26.5"/></g></svg>
<div class="t" style="left:560.4px;top:2309.8px;font-size:31.00px;color:#9d9eab;letter-spacing:-0.396px;">postcode2</div>
<div class="t" style="left:962.4px;top:2309.8px;font-size:31.00px;color:#9d9eab;letter-spacing:-0.464px;">7.95 Mb</div>
<div class="t" style="left:1227.2px;top:2309.8px;font-size:31.00px;color:#9d9eab;letter-spacing:-0.436px;">30.74 Mb</div>
<div class="t" style="left:1579.2px;top:2309.8px;font-size:31.00px;color:#9d9eab;letter-spacing:-1.577px;">74.15%</div>
<div class="t" style="left:1843.3px;top:2309.8px;font-size:31.00px;color:#9d9eab;letter-spacing:-0.486px;">LowCardinality(String)</div>
<div class="t" style="left:2896.6px;top:2309.8px;font-size:31.00px;color:#9d9eab;letter-spacing:-0.100px;">default</div>
<div class="t" style="left:3068.3px;top:2309.8px;font-size:31.00px;color:#9d9eab;letter-spacing:-0.464px;">2.20 Mb</div>
<div class="b" style="left:1121.0px;top:2297.8px;width:55.5px;height:55.5px;border:3.9px solid #1e9be8;border-radius:16px;background:#2b2b2d;"></div>
<svg style="left:1121.0px;top:2297.8px" width="56" height="56" viewBox="0 0 56 56"><g fill="none" stroke="#ffffff" stroke-width="2.8" stroke-linecap="round" stroke-linejoin="round"><path d="M16.1 15.2 V40.1 H40.4"/><path d="M22 34 L38.1 17.9 M29.2 17.7 H38.1 V26.5"/></g></svg>
<div class="b" style="left:1473.2px;top:2297.8px;width:55.5px;height:55.5px;border:3.9px solid #24272b;border-radius:16px;"></div>
<svg style="left:1473.2px;top:2297.8px" width="56" height="56" viewBox="0 0 56 56"><g fill="none" stroke="#505156" stroke-width="2.8" stroke-linecap="round" stroke-linejoin="round"><path d="M16.1 15.2 V40.1 H40.4"/><path d="M22 34 L38.1 17.9 M29.2 17.7 H38.1 V26.5"/></g></svg>
<div class="b" style="left:1737.0px;top:2297.8px;width:55.5px;height:55.5px;border:3.9px solid #24272b;border-radius:16px;"></div>
<svg style="left:1737.0px;top:2297.8px" width="56" height="56" viewBox="0 0 56 56"><g fill="none" stroke="#505156" stroke-width="2.8" stroke-linecap="round" stroke-linejoin="round"><path d="M16.1 15.2 V40.1 H40.4"/><path d="M22 34 L38.1 17.9 M29.2 17.7 H38.1 V26.5"/></g></svg>
<div class="t" style="left:560.4px;top:2391.8px;font-size:31.00px;color:#9d9eab;letter-spacing:-0.187px;">locality</div>
<div class="t" style="left:962.4px;top:2391.8px;font-size:31.00px;color:#9d9eab;letter-spacing:-0.464px;">7.67 Mb</div>
<div class="t" style="left:1227.2px;top:2391.8px;font-size:31.00px;color:#9d9eab;letter-spacing:-0.436px;">31.04 Mb</div>
<div class="t" style="left:1579.2px;top:2391.8px;font-size:31.00px;color:#9d9eab;letter-spacing:-1.577px;">75.28%</div>
<div class="t" style="left:1843.3px;top:2391.8px;font-size:31.00px;color:#9d9eab;letter-spacing:-0.486px;">LowCardinality(String)</div>
<div class="t" style="left:2896.6px;top:2391.8px;font-size:31.00px;color:#9d9eab;letter-spacing:-0.100px;">default</div>
<div class="t" style="left:3068.3px;top:2391.8px;font-size:31.00px;color:#9d9eab;letter-spacing:-1.006px;">933.28 Kb</div>
<div class="b" style="left:1121.0px;top:2379.8px;width:55.5px;height:55.5px;border:3.9px solid #24272b;border-radius:16px;"></div>
<svg style="left:1121.0px;top:2379.8px" width="56" height="56" viewBox="0 0 56 56"><g fill="none" stroke="#505156" stroke-width="2.8" stroke-linecap="round" stroke-linejoin="round"><path d="M16.1 15.2 V40.1 H40.4"/><path d="M22 34 L38.1 17.9 M29.2 17.7 H38.1 V26.5"/></g></svg>
<div class="b" style="left:1473.2px;top:2379.8px;width:55.5px;height:55.5px;border:3.9px solid #24272b;border-radius:16px;"></div>
<svg style="left:1473.2px;top:2379.8px" width="56" height="56" viewBox="0 0 56 56"><g fill="none" stroke="#505156" stroke-width="2.8" stroke-linecap="round" stroke-linejoin="round"><path d="M16.1 15.2 V40.1 H40.4"/><path d="M22 34 L38.1 17.9 M29.2 17.7 H38.1 V26.5"/></g></svg>
<div class="b" style="left:1737.0px;top:2379.8px;width:55.5px;height:55.5px;border:3.9px solid #24272b;border-radius:16px;"></div>
<svg style="left:1737.0px;top:2379.8px" width="56" height="56" viewBox="0 0 56 56"><g fill="none" stroke="#505156" stroke-width="2.8" stroke-linecap="round" stroke-linejoin="round"><path d="M16.1 15.2 V40.1 H40.4"/><path d="M22 34 L38.1 17.9 M29.2 17.7 H38.1 V26.5"/></g></svg>
<div class="t" style="left:560.4px;top:2473.8px;font-size:31.00px;color:#9d9eab;letter-spacing:-0.909px;">type</div>
<div class="t" style="left:962.4px;top:2473.8px;font-size:31.00px;color:#9d9eab;letter-spacing:-0.464px;">7.42 Mb</div>
<div class="t" style="left:1227.2px;top:2473.8px;font-size:31.00px;color:#9d9eab;letter-spacing:-0.436px;">15.33 Mb</div>
<div class="t" style="left:1579.2px;top:2473.8px;font-size:31.00px;color:#9d9eab;letter-spacing:-1.577px;">51.58%</div>
<div class="t" style="left:1843.3px;top:2473.8px;font-size:31.00px;color:#9d9eab;letter-spacing:-0.802px;">Enum8('other' = 0, 'terraced' = 1, 'semi-detached' = 2, 'detached' = 3, 'flat' = 4)</div>
<div class="t" style="left:2896.6px;top:2473.8px;font-size:31.00px;color:#9d9eab;letter-spacing:-0.100px;">default</div>
<div class="t" style="left:3068.3px;top:2473.8px;font-size:31.00px;color:#9d9eab;letter-spacing:-0.689px;">594.03 Kb</div>
<div class="b" style="left:1121.0px;top:2461.8px;width:55.5px;height:55.5px;border:3.9px solid #24272b;border-radius:16px;"></div>
<svg style="left:1121.0px;top:2461.8px" width="56" height="56" viewBox="0 0 56 56"><g fill="none" stroke="#505156" stroke-width="2.8" stroke-linecap="round" stroke-linejoin="round"><path d="M16.1 15.2 V40.1 H40.4"/><path d="M22 34 L38.1 17.9 M29.2 17.7 H38.1 V26.5"/></g></svg>
<div class="b" style="left:1473.2px;top:2461.8px;width:55.5px;height:55.5px;border:3.9px solid #24272b;border-radius:16px;"></div>
<svg style="left:1473.2px;top:2461.8px" width="56" height="56" viewBox="0 0 56 56"><g fill="none" stroke="#505156" stroke-width="2.8" stroke-linecap="round" stroke-linejoin="round"><path d="M16.1 15.2 V40.1 H40.4"/><path d="M22 34 L38.1 17.9 M29.2 17.7 H38.1 V26.5"/></g></svg>
<div class="b" style="left:1737.0px;top:2461.8px;width:55.5px;height:55.5px;border:3.9px solid #24272b;border-radius:16px;"></div>
<svg style="left:1737.0px;top:2461.8px" width="56" height="56" viewBox="0 0 56 56"><g fill="none" stroke="#505156" stroke-width="2.8" stroke-linecap="round" stroke-linejoin="round"><path d="M16.1 15.2 V40.1 H40.4"/><path d="M22 34 L38.1 17.9 M29.2 17.7 H38.1 V26.5"/></g></svg>
<div class="t" style="left:560.4px;top:2555.8px;font-size:31.00px;color:#9d9eab;letter-spacing:-0.733px;">addr2</div>
<div class="t" style="left:962.4px;top:2555.8px;font-size:31.00px;color:#9d9eab;letter-spacing:-0.464px;">5.31 Mb</div>
<div class="t" style="left:1227.2px;top:2555.8px;font-size:31.00px;color:#9d9eab;letter-spacing:-0.436px;">27.37 Mb</div>
<div class="t" style="left:1579.2px;top:2555.8px;font-size:31.00px;color:#9d9eab;letter-spacing:-1.577px;">80.60%</div>
<div class="t" style="left:1843.3px;top:2555.8px;font-size:31.00px;color:#9d9eab;letter-spacing:-0.920px;">String</div>
<div class="t" style="left:2896.6px;top:2555.8px;font-size:31.00px;color:#9d9eab;letter-spacing:-0.100px;">default</div>
<div class="t" style="left:3068.3px;top:2555.8px;font-size:31.00px;color:#9d9eab;letter-spacing:-0.689px;">483.63 Kb</div>
<div class="b" style="left:1121.0px;top:2543.8px;width:55.5px;height:55.5px;border:3.9px solid #24272b;border-radius:16px;"></div>
<svg style="left:1121.0px;top:2543.8px" width="56" height="56" viewBox="0 0 56 56"><g fill="none" stroke="#505156" stroke-width="2.8" stroke-linecap="round" stroke-linejoin="round"><path d="M16.1 15.2 V40.1 H40.4"/><path d="M22 34 L38.1 17.9 M29.2 17.7 H38.1 V26.5"/></g></svg>
<div class="b" style="left:1473.2px;top:2543.8px;width:55.5px;height:55.5px;border:3.9px solid #24272b;border-radius:16px;"></div>
<svg style="left:1473.2px;top:2543.8px" width="56" height="56" viewBox="0 0 56 56"><g fill="none" stroke="#505156" stroke-width="2.8" stroke-linecap="round" stroke-linejoin="round"><path d="M16.1 15.2 V40.1 H40.4"/><path d="M22 34 L38.1 17.9 M29.2 17.7 H38.1 V26.5"/></g></svg>
<div class="b" style="left:1737.0px;top:2543.8px;width:55.5px;height:55.5px;border:3.9px solid #24272b;border-radius:16px;"></div>
<svg style="left:1737.0px;top:2543.8px" width="56" height="56" viewBox="0 0 56 56"><g fill="none" stroke="#505156" stroke-width="2.8" stroke-linecap="round" stroke-linejoin="round"><path d="M16.1 15.2 V40.1 H40.4"/><path d="M22 34 L38.1 17.9 M29.2 17.7 H38.1 V26.5"/></g></svg>
<div class="t" style="left:560.4px;top:2637.8px;font-size:31.00px;color:#9d9eab;letter-spacing:-0.434px;">duration</div>
<div class="t" style="left:962.4px;top:2637.8px;font-size:31.00px;color:#9d9eab;letter-spacing:-0.464px;">2.73 Mb</div>
<div class="t" style="left:1227.2px;top:2637.8px;font-size:31.00px;color:#9d9eab;letter-spacing:-0.436px;">15.33 Mb</div>
<div class="t" style="left:1579.2px;top:2637.8px;font-size:31.00px;color:#9d9eab;letter-spacing:-1.577px;">82.18%</div>
<div class="t" style="left:1843.3px;top:2637.8px;font-size:31.00px;color:#9d9eab;letter-spacing:-0.813px;">Enum8('unknown' = 0, 'freehold' = 1, 'leasehold' = 2)</div>
<div class="t" style="left:2896.6px;top:2637.8px;font-size:31.00px;color:#9d9eab;letter-spacing:-0.100px;">default</div>
<div class="t" style="left:3068.3px;top:2637.8px;font-size:31.00px;color:#9d9eab;letter-spacing:-0.689px;">347.12 Kb</div>
<div class="b" style="left:1121.0px;top:2625.8px;width:55.5px;height:55.5px;border:3.9px solid #24272b;border-radius:16px;"></div>
<svg style="left:1121.0px;top:2625.8px" width="56" height="56" viewBox="0 0 56 56"><g fill="none" stroke="#505156" stroke-width="2.8" stroke-linecap="round" stroke-linejoin="round"><path d="M16.1 15.2 V40.1 H40.4"/><path d="M22 34 L38.1 17.9 M29.2 17.7 H38.1 V26.5"/></g></svg>
<div class="b" style="left:1473.2px;top:2625.8px;width:55.5px;height:55.5px;border:3.9px solid #24272b;border-radius:16px;"></div>
<svg style="left:1473.2px;top:2625.8px" width="56" height="56" viewBox="0 0 56 56"><g fill="none" stroke="#505156" stroke-width="2.8" stroke-linecap="round" stroke-linejoin="round"><path d="M16.1 15.2 V40.1 H40.4"/><path d="M22 34 L38.1 17.9 M29.2 17.7 H38.1 V26.5"/></g></svg>
<div class="b" style="left:1737.0px;top:2625.8px;width:55.5px;height:55.5px;border:3.9px solid #24272b;border-radius:16px;"></div>
<svg style="left:1737.0px;top:2625.8px" width="56" height="56" viewBox="0 0 56 56"><g fill="none" stroke="#505156" stroke-width="2.8" stroke-linecap="round" stroke-linejoin="round"><path d="M16.1 15.2 V40.1 H40.4"/><path d="M22 34 L38.1 17.9 M29.2 17.7 H38.1 V26.5"/></g></svg>
<div class="t" style="left:2241.0px;top:2745.4px;font-size:32.00px;color:#9d9eab;letter-spacing:-2.650px;-webkit-text-stroke:0.5px #9d9eab;">Page</div>
<div class="b" style="left:2332.2px;top:2734.0px;width:141.3px;height:55.5px;border:3px solid #39414a;border-radius:14px;"></div>
<div class="t" style="left:2394.1px;top:2745.4px;font-size:32.00px;color:#e2e2e8;">1</div>
<div class="t" style="left:2490.3px;top:2745.4px;font-size:32.00px;color:#9d9eab;letter-spacing:-0.933px;">of 2</div>
<div class="b" style="left:2582.3px;top:2734.0px;width:55.3px;height:55.5px;border:3px solid #2e3035;border-radius:14px;"></div>
<svg style="left:2580.8px;top:2734.0px" width="56" height="56"><path d="M29.5 17.5 L21.5 27.5 L29.5 37.5 M38.5 17.5 L30.5 27.5 L38.5 37.5" fill="none" stroke="#a3a5b3" stroke-width="4" stroke-linejoin="miter"/></svg>
<div class="b" style="left:2654.0px;top:2734.0px;width:55.3px;height:55.5px;border:3px solid #2e3035;border-radius:14px;"></div>
<svg style="left:2653.0px;top:2734.0px" width="56" height="56"><path d="M33 17 L24.5 27.5 L33 38" fill="none" stroke="#a3a5b3" stroke-width="4" stroke-linejoin="miter"/></svg>
<div class="b" style="left:2726.0px;top:2734.0px;width:55.3px;height:55.5px;border:3px solid #2e3035;border-radius:14px;"></div>
<svg style="left:2725.0px;top:2734.0px" width="56" height="56"><path d="M24.5 17 L33 27.5 L24.5 38" fill="none" stroke="#a3a5b3" stroke-width="4" stroke-linejoin="miter"/></svg>
<div class="b" style="left:2798.0px;top:2734.0px;width:55.3px;height:55.5px;border:3px solid #2e3035;border-radius:14px;"></div>
<svg style="left:2797.0px;top:2734.0px" width="56" height="56"><path d="M18 17.5 L26 27.5 L18 37.5 M27 17.5 L35 27.5 L27 37.5" fill="none" stroke="#a3a5b3" stroke-width="4" stroke-linejoin="miter"/></svg>
<div class="t" style="left:2894.7px;top:2745.4px;font-size:32.00px;color:#9d9eab;letter-spacing:-2.750px;-webkit-text-stroke:0.5px #9d9eab;">Show</div>
<div class="b" style="left:2992.4px;top:2734.0px;width:248.9px;height:55.5px;border:3px solid #39414a;border-radius:14px;"></div>
<div class="t" style="left:3007.6px;top:2745.4px;font-size:32.00px;color:#e2e2e8;letter-spacing:-1.585px;">10 per page</div>
<svg style="left:3206px;top:2748.0px" width="20" height="28"><path d="M4 3 L15 13.5 L4 24" fill="none" stroke="#a3a5b3" stroke-width="3.8"/></svg>
</body></html>
